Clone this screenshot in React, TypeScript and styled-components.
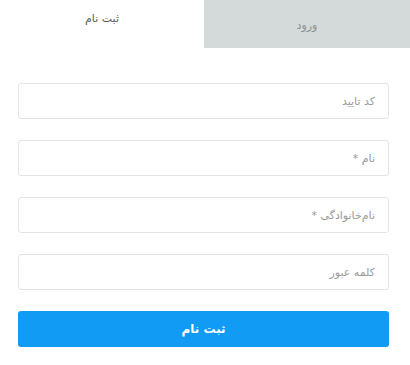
import styled, { createGlobalStyle } from "styled-components";

const GlobalStyle = createGlobalStyle`
  html, body {
    margin: 0;
    padding: 0;
    background: #ffffff;
  }
  body {
    font-family: "DejaVu Sans", "Noto Sans", sans-serif;
  }
`;

const Page = styled.div`
  width: 410px;
  direction: ltr;
`;

const Tabs = styled.div`
  display: grid;
  grid-template-columns: 204px 206px;
  height: 48px;
`;

const Tab = styled.div<{ $active?: boolean }>`
  display: flex;
  justify-content: center;
  align-items: ${(p) => (p.$active ? "flex-start" : "center")};
  padding-top: ${(p) => (p.$active ? "12px" : "2px")};
  box-sizing: border-box;
  background: ${(p) => (p.$active ? "#ffffff" : "#d4d9d9")};
  color: ${(p) => (p.$active ? "#5a5a5a" : "#8c9090")};
  font-size: 11px;
  direction: rtl;
`;

const Form = styled.form`
  display: flex;
  flex-direction: column;
  gap: 21px;
  padding: 35px 21px 0 18px;
`;

const Field = styled.input`
  height: 36px;
  box-sizing: border-box;
  width: 100%;
  border: 1px solid #e3e5e5;
  border-radius: 3px;
  padding: 0 13px;
  direction: rtl;
  font-family: inherit;
  font-size: 11px;
  color: #444;
  outline: none;

  &::placeholder {
    color: #9a9a9a;
  }
`;

const Submit = styled.button`
  height: 36px;
  border: none;
  border-radius: 3px;
  background: #129bf5;
  color: #ffffff;
  font-family: inherit;
  font-weight: bold;
  font-size: 12px;
  direction: rtl;
  cursor: pointer;
`;

const fields = ["کد تایید", "نام *", "نام‌خانوادگی *", "کلمه عبور"];

export default function App() {
  return (
    <Page>
      <GlobalStyle />
      <Tabs>
        <Tab $active>ثبت نام</Tab>
        <Tab>ورود</Tab>
      </Tabs>
      <Form onSubmit={(e) => e.preventDefault()}>
        {fields.map((f) => (
          <Field key={f} placeholder={f} type={f === "کلمه عبور" ? "password" : "text"} />
        ))}
        <Submit type="submit">ثبت نام</Submit>
      </Form>
    </Page>
  );
}
